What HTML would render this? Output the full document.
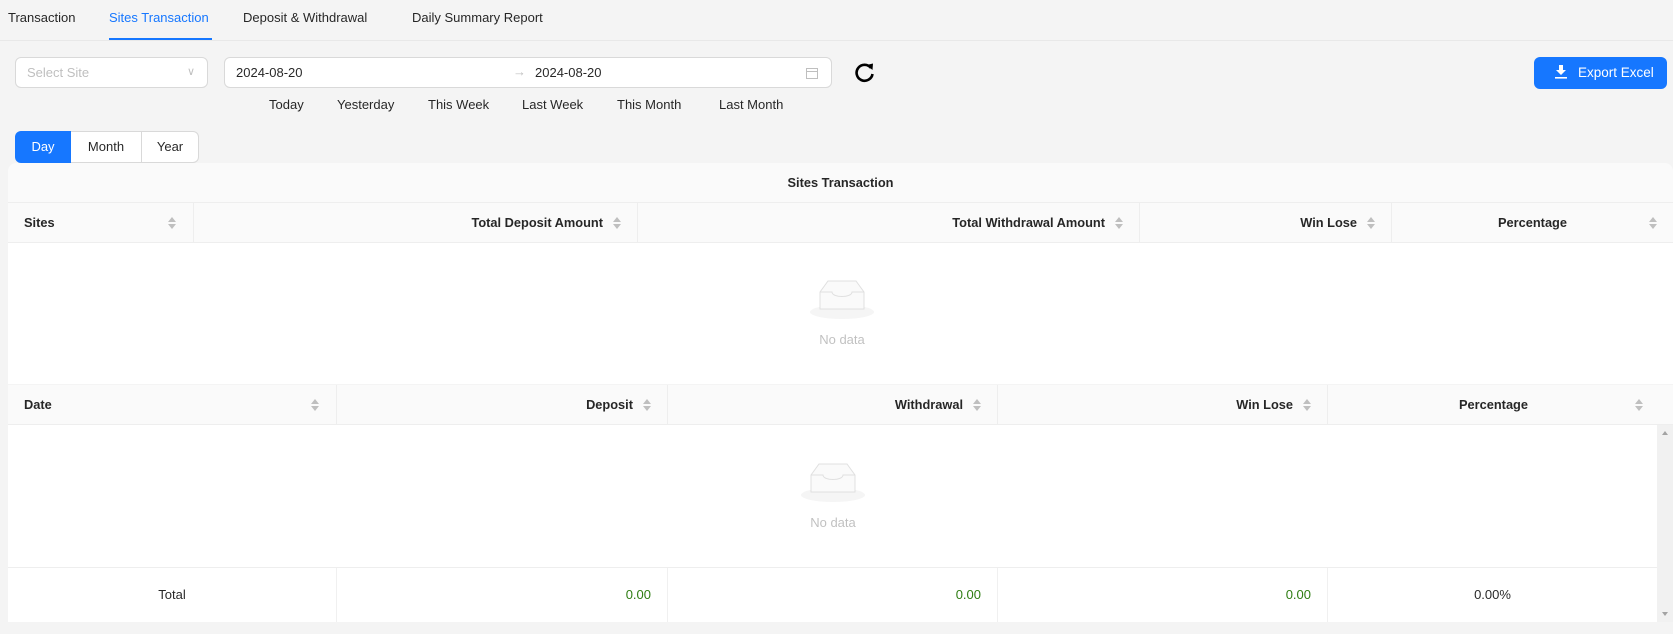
<!DOCTYPE html>
<html><head><meta charset="utf-8"><style>
*{box-sizing:border-box;margin:0;padding:0}
body{width:1673px;height:634px;background:#f4f4f4;font-family:"Liberation Sans",sans-serif;font-size:13px;color:rgba(0,0,0,.85);position:relative;overflow:hidden}
.a{position:absolute}
.tab{position:absolute;top:10px;font-size:13px}
.box{position:absolute;background:#fff;border:1px solid #d9d9d9;border-radius:6px}
.q{position:absolute;top:97px}
.th{position:absolute;height:40px;line-height:40px;background:#fafafa;font-weight:bold;font-size:12.8px;color:rgba(0,0,0,.85);border-right:1px solid #eee;border-bottom:1px solid #eee;padding:0 16px}
.sort{position:absolute;top:14px;width:8px;height:12px}
.sort:before{content:"";position:absolute;top:0;left:0;border:4px solid transparent;border-bottom:5px solid #bfbfbf;border-top:0}
.sort:after{content:"";position:absolute;top:7px;left:0;border:4px solid transparent;border-top:5px solid #bfbfbf;border-bottom:0}
.td{position:absolute;height:54px;line-height:54px;background:#fff;border-right:1px solid #f0f0f0;padding:0 16px}
.g{color:#2e7d12;text-align:right}
</style></head><body>
<div class="tab" style="left:8px">Transaction</div>
<div class="tab" style="left:109px;color:#1677ff">Sites Transaction</div>
<div class="tab" style="left:243px">Deposit &amp; Withdrawal</div>
<div class="tab" style="left:412px">Daily Summary Report</div>
<div class="a" style="left:0;top:40px;width:1673px;height:1px;background:#e8e8e8"></div>
<div class="a" style="left:109px;top:38px;width:103px;height:2px;background:#1677ff"></div>

<div class="box" style="left:15px;top:57px;width:193px;height:31px"><span class="a" style="left:11px;top:7px;color:#bfbfbf">Select Site</span><span class="a" style="right:12px;top:7px;color:#bfbfbf;font-size:11px">&#8744;</span></div>
<div class="box" style="left:224px;top:57px;width:608px;height:31px"><span class="a" style="left:11px;top:7px">2024-08-20</span><span class="a" style="left:288px;top:6px;color:#bfbfbf">&#8594;</span><span class="a" style="left:310px;top:7px">2024-08-20</span>
<svg class="a" style="right:12px;top:8px" width="14" height="14" viewBox="0 0 14 14"><rect x="1.5" y="2.5" width="11" height="10" fill="none" stroke="#bfbfbf"/><line x1="1.5" y1="5.5" x2="12.5" y2="5.5" stroke="#bfbfbf"/></svg></div>
<svg class="a" style="left:854px;top:61px" width="22" height="22" viewBox="0 0 22 22"><path d="M17 7A8 8 0 1 0 18.5 13" fill="none" stroke="#000" stroke-width="2.6"/><path d="M12.5 4L19 2.5 18.5 9z" fill="#000"/></svg>
<div class="q" style="left:269px">Today</div><div class="q" style="left:337px">Yesterday</div><div class="q" style="left:428px">This Week</div><div class="q" style="left:522px">Last Week</div><div class="q" style="left:617px">This Month</div><div class="q" style="left:719px">Last Month</div>

<div class="a" style="left:1534px;top:57px;width:133px;height:32px;background:#1677ff;border-radius:6px;color:#fff;font-size:13.5px;line-height:32px">
<svg class="a" style="left:20px;top:7px" width="14" height="16" viewBox="0 0 14 16"><path d="M5 1h4v5h3l-5 5-5-5h3z" fill="#fff"/><rect x="1" y="13" width="12" height="1.6" fill="#fff"/></svg>
<span class="a" style="left:44px">Export Excel</span></div>

<div class="a" style="left:15px;top:131px;width:56px;height:32px;background:#1677ff;color:#fff;border-radius:6px 0 0 6px;text-align:center;line-height:32px">Day</div>
<div class="a" style="left:71px;top:131px;width:71px;height:32px;background:#fff;border:1px solid #d9d9d9;border-left:0;text-align:center;line-height:30px">Month</div>
<div class="a" style="left:142px;top:131px;width:57px;height:32px;background:#fff;border:1px solid #d9d9d9;border-left:0;border-radius:0 6px 6px 0;text-align:center;line-height:30px">Year</div>

<div class="a" style="left:8px;top:163px;width:1665px;height:40px;background:#fafafa;border-radius:8px 8px 0 0;border-bottom:1px solid #eee;text-align:center;line-height:40px;font-weight:bold;font-size:12.8px">Sites Transaction</div>
<div class="th" style="left:8px;top:203px;width:186px">Sites<span class="sort" style="left:160px"></span></div>
<div class="th" style="left:194px;top:203px;width:444px;text-align:right;padding-right:34px">Total Deposit Amount<span class="sort" style="right:16px"></span></div>
<div class="th" style="left:638px;top:203px;width:502px;text-align:right;padding-right:34px">Total Withdrawal Amount<span class="sort" style="right:16px"></span></div>
<div class="th" style="left:1140px;top:203px;width:252px;text-align:right;padding-right:34px">Win Lose<span class="sort" style="right:16px"></span></div>
<div class="th" style="left:1392px;top:203px;width:281px;text-align:center;border-right:0">Percentage<span class="sort" style="right:16px"></span></div>
<div class="a" style="left:8px;top:243px;width:1665px;height:141px;background:#fff"></div>
<svg class="a" style="left:810px;top:279px" width="64" height="41" viewBox="0 0 64 41"><ellipse cx="32" cy="33" rx="32" ry="7" fill="#f5f5f5"/><path d="M10 13L18 2H46L54 13V30H10Z" fill="#fafafa" stroke="#e0e0e0"/><path d="M10 13H22C22 19 42 19 42 13H54" fill="none" stroke="#e0e0e0"/></svg>
<div class="a" style="left:790px;top:332px;width:104px;text-align:center;color:rgba(0,0,0,.25)">No data</div>

<div class="th" style="left:8px;top:385px;width:329px">Date<span class="sort" style="left:303px"></span></div>
<div class="th" style="left:337px;top:385px;width:331px;text-align:right;padding-right:34px">Deposit<span class="sort" style="right:16px"></span></div>
<div class="th" style="left:668px;top:385px;width:330px;text-align:right;padding-right:34px">Withdrawal<span class="sort" style="right:16px"></span></div>
<div class="th" style="left:998px;top:385px;width:330px;text-align:right;padding-right:34px">Win Lose<span class="sort" style="right:16px"></span></div>
<div class="th" style="left:1328px;top:385px;width:345px;text-align:center;border-right:0;padding-right:30px">Percentage<span class="sort" style="right:30px"></span></div>
<div class="a" style="left:8px;top:425px;width:1649px;height:142px;background:#fff"></div>
<div class="a" style="left:1657px;top:425px;width:16px;height:197px;background:#f1f1f1"></div>
<div class="a" style="left:1662px;top:431px;border:3px solid transparent;border-bottom:4px solid #a3a3a3;border-top:0"></div>
<div class="a" style="left:1662px;top:612px;border:3px solid transparent;border-top:4px solid #a3a3a3;border-bottom:0"></div>
<svg class="a" style="left:801px;top:462px" width="64" height="41" viewBox="0 0 64 41"><ellipse cx="32" cy="33" rx="32" ry="7" fill="#f5f5f5"/><path d="M10 13L18 2H46L54 13V30H10Z" fill="#fafafa" stroke="#e0e0e0"/><path d="M10 13H22C22 19 42 19 42 13H54" fill="none" stroke="#e0e0e0"/></svg>
<div class="a" style="left:781px;top:515px;width:104px;text-align:center;color:rgba(0,0,0,.25)">No data</div>
<div class="a" style="left:8px;top:567px;width:1649px;height:1px;background:#eee"></div>
<div class="td" style="left:8px;top:568px;width:329px;text-align:center">Total</div>
<div class="td g" style="left:337px;top:568px;width:331px">0.00</div>
<div class="td g" style="left:668px;top:568px;width:330px">0.00</div>
<div class="td g" style="left:998px;top:568px;width:330px">0.00</div>
<div class="td" style="left:1328px;top:568px;width:329px;text-align:center;border-right:0">0.00%</div>
</body></html>
